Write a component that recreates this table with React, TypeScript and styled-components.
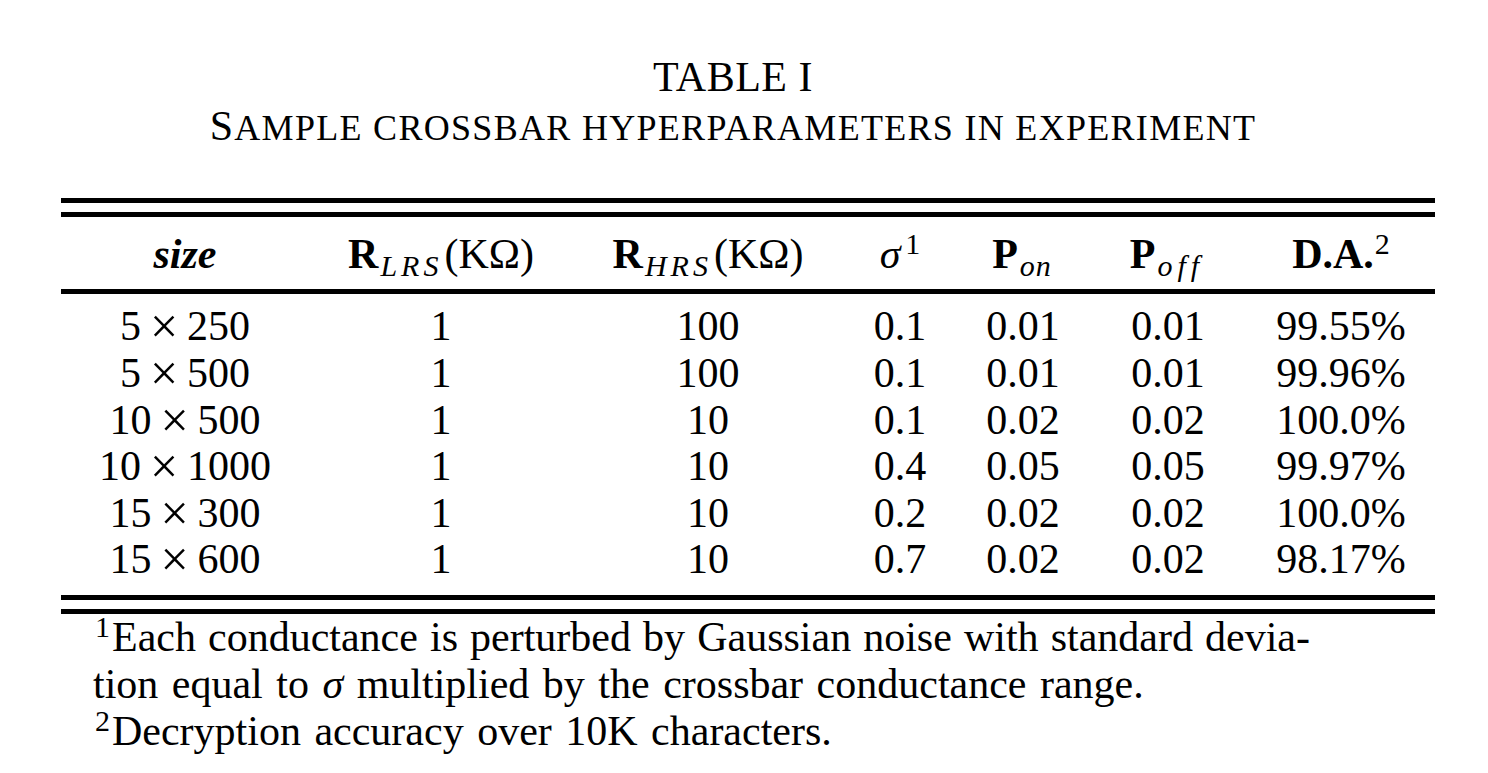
import React from "react";
import styled, { createGlobalStyle } from "styled-components";

const GlobalStyle = createGlobalStyle`
  html, body {
    margin: 0;
    padding: 0;
    background: #ffffff;
  }
  body {
    font-family: "Liberation Serif", "Times New Roman", serif;
    color: #000000;
  }
`;

const COLS = "248px 264px 270px 114px 132px 158px 188px";

const Page = styled.div`
  width: 1374px;
  padding: 53px 0 20px 61px;
`;

const Caption = styled.div`
  text-align: center;
  padding-right: 30px;
  margin-bottom: 45px;
`;

const Title = styled.div`
  font-size: 42px;
  line-height: 49px;
  letter-spacing: 0.5px;
`;

const SubTitle = styled.div`
  font-size: 36px;
  line-height: 49px;
  letter-spacing: 1.3px;
  text-transform: uppercase;
`;

const BigCap = styled.span`
  font-size: 42px;
`;

const DoubleRule = styled.div`
  height: 9px;
  border-top: 5px solid #000;
  border-bottom: 5px solid #000;
`;

const Row = styled.div`
  display: grid;
  grid-template-columns: ${COLS};
  font-size: 42px;
  line-height: 46.6px;
`;

const HeadRow = styled(Row)`
  padding: 13.5px 0 11.9px;
  border-bottom: 5px solid #000;
`;

const Body = styled.div`
  padding: 9.5px 0 11.9px;
`;

const Cell = styled.div`
  text-align: center;
  white-space: nowrap;
`;

const BoldItalic = styled.span`
  font-weight: bold;
  font-style: italic;
`;

const Bold = styled.span`
  font-weight: bold;
`;

const MathVar = styled.span`
  font-style: italic;
`;

const Sub = styled.span<{ $spread?: number }>`
  font-size: 30px;
  font-style: italic;
  font-weight: normal;
  vertical-align: -8px;
  line-height: 0;
  letter-spacing: ${(p) => p.$spread ?? 2}px;
  margin-left: 2px;
  margin-right: 2px;
`;

const Sup = styled.span<{ $gap?: number }>`
  font-size: 30px;
  font-weight: normal;
  vertical-align: 14px;
  line-height: 0;
  margin-left: ${(p) => p.$gap ?? 0}px;
`;

const Times = styled.span`
  font-size: 50px;
  line-height: 0;
  vertical-align: -3px;
  margin: 0 9px;
`;

const Notes = styled.div`
  margin-left: 32px;
  width: 1217px;
  font-size: 42px;
  line-height: 47px;
`;

const NoteLine = styled.div<{ $justify?: boolean }>`
  white-space: ${(p) => (p.$justify ? "normal" : "nowrap")};
  text-align: ${(p) => (p.$justify ? "justify" : "left")};
  text-align-last: ${(p) => (p.$justify ? "justify" : "auto")};
  word-spacing: ${(p) => (p.$justify ? 0 : 3)}px;
`;

const NoteMark = styled.span`
  font-size: 30px;
  vertical-align: 14px;
  line-height: 0;
  margin-left: 2px;
  margin-right: 2px;
`;

type DataRow = {
  a: string;
  b: string;
  rl: string;
  rh: string;
  s: string;
  on: string;
  off: string;
  da: string;
};

const rows: DataRow[] = [
  { a: "5", b: "250", rl: "1", rh: "100", s: "0.1", on: "0.01", off: "0.01", da: "99.55%" },
  { a: "5", b: "500", rl: "1", rh: "100", s: "0.1", on: "0.01", off: "0.01", da: "99.96%" },
  { a: "10", b: "500", rl: "1", rh: "10", s: "0.1", on: "0.02", off: "0.02", da: "100.0%" },
  { a: "10", b: "1000", rl: "1", rh: "10", s: "0.4", on: "0.05", off: "0.05", da: "99.97%" },
  { a: "15", b: "300", rl: "1", rh: "10", s: "0.2", on: "0.02", off: "0.02", da: "100.0%" },
  { a: "15", b: "600", rl: "1", rh: "10", s: "0.7", on: "0.02", off: "0.02", da: "98.17%" },
];

export default function App() {
  return (
    <>
      <GlobalStyle />
      <Page>
        <Caption>
          <Title>TABLE I</Title>
          <SubTitle>
            <BigCap>S</BigCap>ample crossbar hyperparameters in experiment
          </SubTitle>
        </Caption>

        <DoubleRule />
        <HeadRow>
          <Cell>
            <BoldItalic>size</BoldItalic>
          </Cell>
          <Cell>
            <Bold>R</Bold>
            <Sub $spread={4}>LRS</Sub>(KΩ)
          </Cell>
          <Cell>
            <Bold>R</Bold>
            <Sub $spread={4}>HRS</Sub>(KΩ)
          </Cell>
          <Cell>
            <MathVar>σ</MathVar>
            <Sup $gap={5}>1</Sup>
          </Cell>
          <Cell>
            <Bold>P</Bold>
            <Sub $spread={1}>on</Sub>
          </Cell>
          <Cell>
            <Bold>P</Bold>
            <Sub $spread={5}>off</Sub>
          </Cell>
          <Cell>
            <Bold>D.A.</Bold>
            <Sup $gap={1}>2</Sup>
          </Cell>
        </HeadRow>

        <Body>
          {rows.map((r, i) => (
            <Row key={i}>
              <Cell>
                {r.a}
                <Times>×</Times>
                {r.b}
              </Cell>
              <Cell>{r.rl}</Cell>
              <Cell>{r.rh}</Cell>
              <Cell>{r.s}</Cell>
              <Cell>{r.on}</Cell>
              <Cell>{r.off}</Cell>
              <Cell>{r.da}</Cell>
            </Row>
          ))}
        </Body>
        <DoubleRule />

        <Notes>
          <NoteLine $justify>
            <NoteMark>1</NoteMark>Each conductance is perturbed by Gaussian noise with standard devia-
          </NoteLine>
          <NoteLine>
            tion equal to <MathVar>σ</MathVar> multiplied by the crossbar conductance range.
          </NoteLine>
          <NoteLine>
            <NoteMark>2</NoteMark>Decryption accuracy over 10K characters.
          </NoteLine>
        </Notes>
      </Page>
    </>
  );
}
